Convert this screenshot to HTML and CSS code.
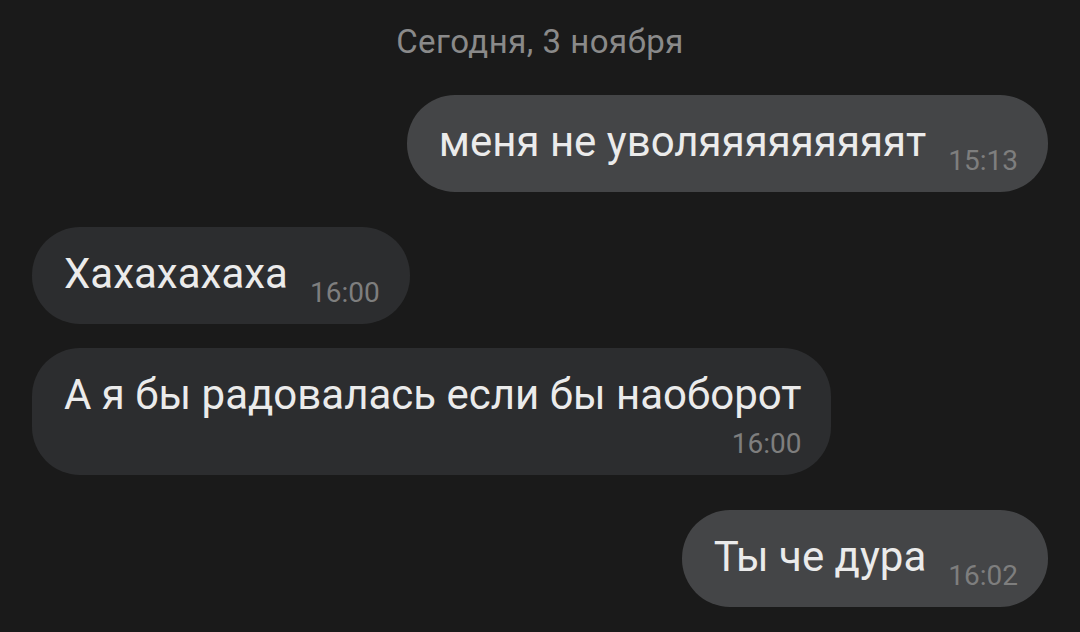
FILE: index.html
```html
<!DOCTYPE html>
<html lang="ru">
<head>
<meta charset="utf-8">
<title>Чат</title>
<link rel="stylesheet" href="styles.css">
</head>
<body>
<div class="chat">
  <div class="date">Сегодня, 3 ноября</div>
  <div class="bubble out">
    <span class="text">меня не уволяяяяяяяяят</span>
    <span class="time">15:13</span>
  </div>
  <div class="bubble in gap-lg">
    <span class="text">Хахахахаха</span>
    <span class="time">16:00</span>
  </div>
  <div class="bubble in stacked gap-sm">
    <span class="text">А я бы радовалась если бы наоборот</span>
    <span class="time">16:00</span>
  </div>
  <div class="bubble out gap-lg">
    <span class="text">Ты че дура</span>
    <span class="time">16:02</span>
  </div>
</div>
</body>
</html>
```
FILE: styles.css
```css
html, body {
  margin: 0;
  padding: 0;
  background: #1a1a1a;
}
body {
  width: 1080px;
  height: 632px;
  overflow: hidden;
  font-family: Roboto, "Noto Sans", sans-serif;
}
.chat {
  display: flex;
  flex-direction: column;
  padding: 23px 32px 0 32px;
}
.date {
  text-align: center;
  font-size: 33px;
  line-height: 38px;
  letter-spacing: 0.5px;
  color: #8a8a8a;
  margin-bottom: 34px;
}
.bubble {
  display: flex;
  align-items: flex-start;
  column-gap: 22px;
  padding: 22px 30px 15px 32px;
  border-radius: 48px;
  box-sizing: border-box;
}
.bubble.out {
  align-self: flex-end;
  background: #444547;
}
.bubble.in {
  align-self: flex-start;
  background: #2c2d2f;
}
.gap-lg { margin-top: 35px; }
.gap-sm { margin-top: 24px; }
.text {
  font-size: 42px;
  line-height: 50px;
  color: #ebebeb;
  white-space: nowrap;
}
.time {
  font-size: 28px;
  line-height: 32px;
  color: #7e7e7e;
  margin-top: 28px;
  white-space: nowrap;
}
.bubble.stacked {
  flex-direction: column;
}
.bubble.stacked .time {
  align-self: flex-end;
  margin-top: 8px;
}
```
